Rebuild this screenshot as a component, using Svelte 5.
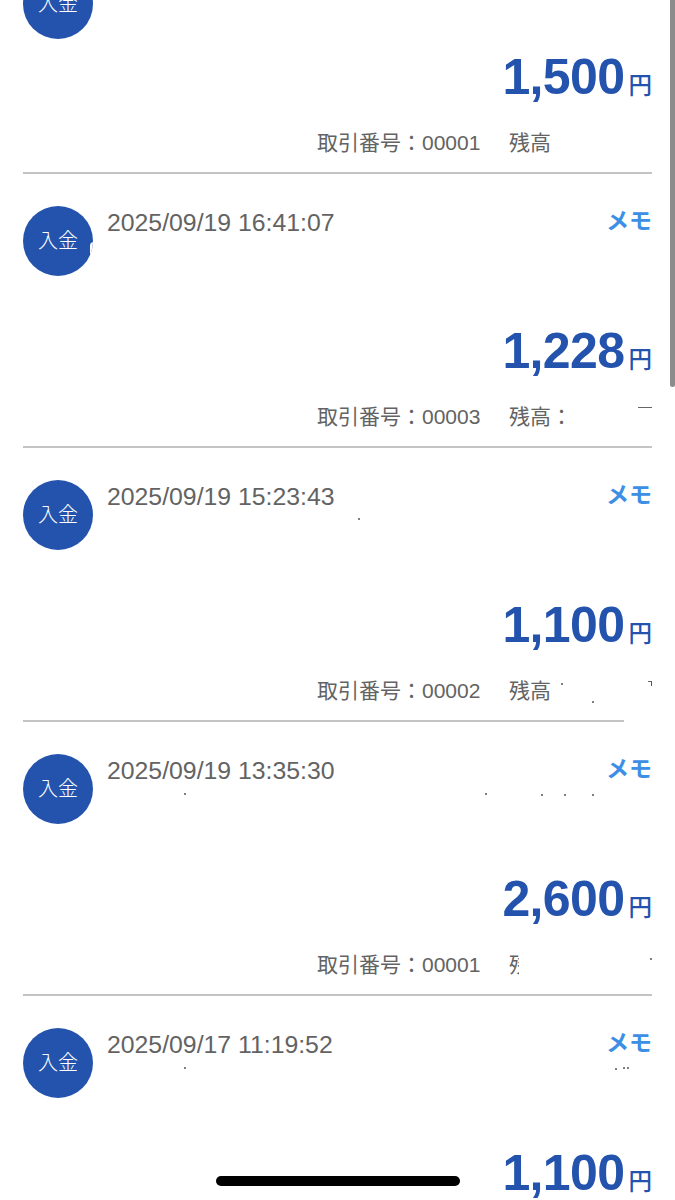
<script lang="ts">
	const rows = [
		{ date: '', amount: '1,500', no: '00001', balance: '残高', lower: true, specks: [] },
		{ date: '2025/09/19 16:41:07', amount: '1,228', no: '00003', balance: '残高：', notch: true, mark: 'corner', specks: [] },
		{ date: '2025/09/19 15:23:43', amount: '1,100', no: '00002', balance: '残高', short: true, mark: 'bracket', specks: [[335, 70], [538, 235], [569, 253]] },
		{ date: '2025/09/19 13:35:30', amount: '2,600', no: '00001', balance: '残', clip: true, specks: [[161, 71], [462, 71], [518, 72], [541, 72], [569, 72], [627, 236]] },
		{ date: '2025/09/17 11:19:52', amount: '1,100', no: '', balance: '', specks: [[161, 71], [592, 72], [600, 71], [604, 71]] }
	];
</script>

<div class="screen">
	<ul class="list">
		{#each rows as row}
			<li class="row" class:short={row.short}>
				<div class="top">
					<div class="badge" class:notch={row.notch} class:lower={row.lower}>入金</div>
					<div class="date">{row.date}</div>
					{#if row.date}<div class="memo">メモ</div>{/if}
				</div>
				<div class="amount"><b>{row.amount}</b><span>円</span></div>
				{#if row.no}
					<div class="meta">
						<span class="no">取引番号：{row.no}</span>
						<span class="balance" class:clip={row.clip}>{row.balance}</span>
						{#if row.mark}<i class="mark {row.mark}"></i>{/if}
					</div>
				{/if}
				{#each row.specks as [x, y]}
					<i class="speck" style="left: {x}px; top: {y}px"></i>
				{/each}
			</li>
		{/each}
	</ul>
	<div class="scrollbar"></div>
	<div class="home"></div>
</div>

<style>
	:global(body) {
		background: #fff;
	}

	.screen {
		position: relative;
		height: 1200px;
		overflow: hidden;
		background: #fff;
		font-family: "Liberation Sans", "Noto Sans CJK JP", sans-serif;
		color: #636363;
	}

	.list {
		list-style: none;
		margin: -100px 23px 0;
		padding: 0;
		width: 629px;
	}

	.row {
		position: relative;
		height: 272px;
		border-bottom: 2px solid #c4c4c4;
		display: flex;
		flex-direction: column;
	}

	.row:last-child {
		border-bottom: none;
	}

	.row.short {
		border-bottom-color: transparent;
	}

	.row.short::after {
		content: '';
		position: absolute;
		left: 0;
		bottom: -2px;
		width: 601px;
		height: 2px;
		background: #c4c4c4;
	}

	.top {
		display: flex;
		align-items: flex-start;
		padding-top: 32px;
		height: 70px;
	}

	.badge {
		position: relative;
		width: 70px;
		height: 70px;
		flex: none;
		border-radius: 50%;
		background: #2353ad;
		color: #fff;
		font-size: 20px;
		font-weight: 300;
		line-height: 71px;
		text-align: center;
		overflow: hidden;
	}

	.badge.lower {
		margin-top: 37px;
	}

	.badge.notch::after {
		content: '';
		position: absolute;
		right: -5px;
		top: 36px;
		width: 8px;
		height: 20px;
		border-radius: 4px;
		background: #fff;
	}

	.date {
		margin-left: 14px;
		margin-top: 1px;
		flex: 1;
		font-size: 24.8px;
		line-height: 32px;
	}

	.memo {
		color: #3d8fe6;
		font-size: 23px;
		font-weight: 700;
		line-height: 30px;
	}

	.amount {
		margin-top: 45px;
		display: flex;
		justify-content: flex-end;
		align-items: baseline;
		color: #2353ad;
		line-height: 60px;
	}

	.amount b {
		font-size: 50px;
		letter-spacing: -0.6px;
	}

	.amount span {
		margin-left: 4px;
		font-size: 23.5px;
		font-weight: 500;
	}

	.meta {
		position: relative;
		margin-top: 12px;
		padding-left: 294px;
		display: flex;
		font-size: 21px;
		line-height: 30px;
	}

	.no {
		width: 192px;
		white-space: nowrap;
	}

	.balance.clip {
		width: 10px;
		overflow: hidden;
		white-space: nowrap;
	}

	.mark {
		position: absolute;
		right: 0;
		top: 5px;
		width: 14px;
		height: 4px;
		border-top: 1px solid #666;
	}

	.mark.bracket {
		width: 3px;
		height: 4px;
		border-right: 1px solid #555;
	}

	.speck {
		position: absolute;
		width: 2px;
		height: 2px;
		border-radius: 50%;
		background: #555;
	}

	.scrollbar {
		position: absolute;
		top: 0;
		right: 0;
		width: 5px;
		height: 387px;
		border-radius: 0 0 3px 3px;
		background: #8c8c8c;
	}

	.home {
		position: absolute;
		left: 216px;
		top: 1176px;
		width: 244px;
		height: 10px;
		border-radius: 5px;
		background: #000;
	}
</style>
